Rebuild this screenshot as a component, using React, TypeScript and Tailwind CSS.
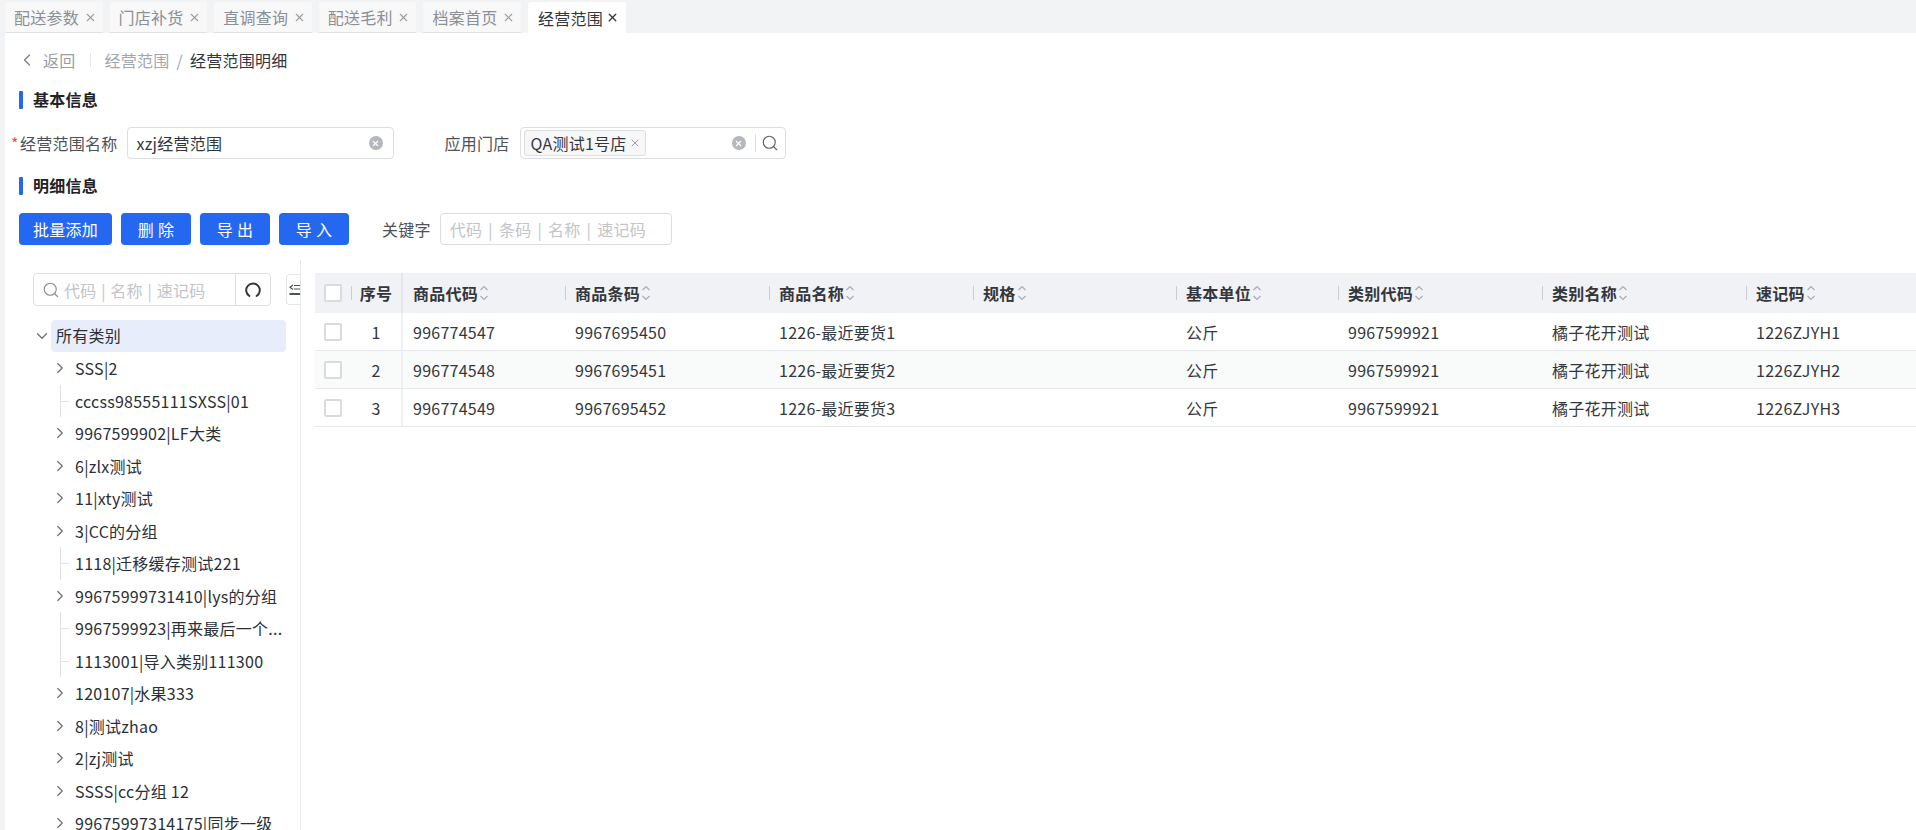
import { ChevronDown, ChevronLeft, ChevronRight, Search, X } from 'lucide-react';

const tabs = ['配送参数', '门店补货', '直调查询', '配送毛利', '档案首页'];

interface TreeItem {
  label: string;
  leaf?: boolean;
}

const treeItems: TreeItem[] = [
  { label: 'SSS|2' },
  { label: 'cccss98555111SXSS|01', leaf: true },
  { label: '9967599902|LF大类' },
  { label: '6|zlx测试' },
  { label: '11|xty测试' },
  { label: '3|CC的分组' },
  { label: '1118|迁移缓存测试221', leaf: true },
  { label: '99675999731410|lys的分组' },
  { label: '9967599923|再来最后一个...', leaf: true },
  { label: '1113001|导入类别111300', leaf: true },
  { label: '120107|水果333' },
  { label: '8|测试zhao' },
  { label: '2|zj测试' },
  { label: 'SSSS|cc分组 12' },
  { label: '99675997314175|同步一级' },
];

const rows = [
  { no: 1, code: '996774547', bar: '9967695450', name: '1226-最近要货1', quick: '1226ZJYH1' },
  { no: 2, code: '996774548', bar: '9967695451', name: '1226-最近要货2', quick: '1226ZJYH2' },
  { no: 3, code: '996774549', bar: '9967695452', name: '1226-最近要货3', quick: '1226ZJYH3' },
];

const columns = ['商品代码', '商品条码', '商品名称', '规格', '基本单位', '类别代码', '类别名称', '速记码'];

const gridCols = 'grid grid-cols-[36px_52px_162px_204px_204px_203px_162px_204px_204px_1fr]';

function SectionTitle({ title }: { title: string }) {
  return (
    <div className="flex items-center gap-[10px] h-[18px]">
      <span className="w-[4px] h-[18px] rounded-[1px] bg-[#2468f2]" />
      <span className="font-bold text-[#1f2329] pb-[2px]">{title}</span>
    </div>
  );
}

function ClearDot() {
  return (
    <span className="w-[14px] h-[14px] rounded-full bg-[#b4b7bd] flex items-center justify-center shrink-0">
      <X className="w-[9px] h-[9px] text-white" strokeWidth={3} />
    </span>
  );
}

function SortIcon() {
  return (
    <svg width="10" height="18" viewBox="0 0 10 18" fill="none" stroke="#a9adb5" strokeWidth="1.2" className="ml-[1px]">
      <path d="M1.5 6 L5 2.5 L8.5 6" />
      <path d="M1.5 12 L5 15.5 L8.5 12" />
    </svg>
  );
}

function Checkbox() {
  return <span className="block w-[18px] h-[18px] rounded-[2px] border-2 border-[#d9dbdf] bg-white" />;
}

function ActionButton({ label, wide }: { label: string; wide?: boolean }) {
  return (
    <button className={`${wide ? 'w-[93px]' : 'w-[70px]'} h-[32px] rounded-[4px] bg-[#2468f2] text-white`}>
      {label}
    </button>
  );
}

function TreeRow({ item }: { item: TreeItem }) {
  return (
    <div className="relative h-[32.5px] flex items-center pl-[55px] text-[#2b2f36] whitespace-nowrap">
      {item.leaf ? (
        <>
          <span className="absolute left-[55px] top-0 bottom-0 w-px bg-[#dfe1e5]" />
          <span className="absolute left-[55px] top-1/2 w-[9px] h-px bg-[#dfe1e5]" />
        </>
      ) : (
        <ChevronRight className="absolute left-[46px] w-[18px] h-[18px] text-[#6b7078]" strokeWidth={1.6} />
      )}
      <span className="ml-[15px]">{item.label}</span>
    </div>
  );
}

export default function App() {
  return (
    <div
      className="w-[1916px] h-[830px] overflow-hidden bg-[#f2f3f5] text-[16px] leading-none tracking-[0.25px] flex flex-col"
      style={{ fontFamily: '"Noto Sans CJK SC", "Noto Sans", sans-serif' }}
    >
      {/* Tab strip */}
      <div className="h-[33px] shrink-0 pt-[2px] pl-[5px] flex gap-[7px]">
        {tabs.map((tab) => (
          <div
            key={tab}
            className="w-[97.6px] h-[31px] rounded-t-[3px] bg-[#f8f8f9] border-b border-[#dfe1e5] flex items-center justify-between pl-[9px] pr-[6px] text-[#8b8f96]"
          >
            <span>{tab}</span>
            <X className="w-[13px] h-[13px] text-[#9a9da3]" strokeWidth={2} />
          </div>
        ))}
        <div className="w-[98px] h-[31px] rounded-t-[3px] bg-white flex items-center justify-between pl-[10px] pr-[7px] text-[#33373d]">
          <span>经营范围</span>
          <X className="w-[13px] h-[13px] text-[#33373d]" strokeWidth={2.5} />
        </div>
      </div>

      <div className="flex-1 ml-[5px] bg-white flex flex-col min-h-0">
        {/* Breadcrumb */}
        <div className="h-[49px] shrink-0 pl-[12px] flex items-center pt-[4px] text-[#a3a6ac]">
          <ChevronLeft className="w-[20px] h-[20px] text-[#7d8187]" strokeWidth={1.6} />
          <span className="ml-[6px] text-[#9a9da3]">返回</span>
          <span className="w-px h-[14px] bg-[#e4e6ea] ml-[14px]" />
          <span className="ml-[14px]">经营范围</span>
          <span className="mx-[7px]">/</span>
          <span className="text-[#33373d]">经营范围明细</span>
        </div>

        {/* Basic info */}
        <div className="pl-[14px] pt-[9px]">
          <SectionTitle title="基本信息" />
        </div>
        <div className="flex items-center h-[32px] mt-[18px]">
          <span className="w-[15px] pl-[6px] text-[#f04b4b] shrink-0">*</span>
          <span className="text-[#4e5259] whitespace-nowrap">经营范围名称</span>
          <div className="ml-[9px] w-[267px] h-[32px] rounded-[4px] border border-[#dcdee2] flex items-center justify-between pl-[9px] pr-[10px] text-[#33373d]">
            <span>xzj经营范围</span>
            <ClearDot />
          </div>
          <span className="ml-[51px] text-[#4e5259] whitespace-nowrap">应用门店</span>
          <div className="ml-[10px] w-[266px] h-[32px] rounded-[4px] border border-[#dcdee2] flex items-center pl-[3px] pr-[6px] text-[#33373d]">
            <span className="h-[26px] w-[122px] rounded-[3px] border border-[#dcdee2] bg-[#f7f7f8] flex items-center justify-between pl-[6px] pr-[4px] whitespace-nowrap">
              QA测试1号店
              <X className="w-[12px] h-[12px] text-[#9a9da3]" strokeWidth={2} />
            </span>
            <span className="ml-auto"><ClearDot /></span>
            <span className="w-px h-[18px] bg-[#dcdee2] ml-[9px]" />
            <Search className="w-[18px] h-[18px] text-[#5c6066] ml-[5px]" strokeWidth={1.5} />
          </div>
        </div>

        {/* Detail section */}
        <div className="pl-[14px] mt-[18px]">
          <SectionTitle title="明细信息" />
        </div>
        <div className="flex items-center h-[32px] mt-[18px] pl-[14px]">
          <div className="flex gap-[9px]">
            <ActionButton label="批量添加" wide />
            <ActionButton label="删 除" />
            <ActionButton label="导 出" />
            <ActionButton label="导 入" />
          </div>
          <span className="ml-[33px] text-[#4e5259] whitespace-nowrap">关键字</span>
          <div className="ml-[9px] w-[232px] h-[32px] rounded-[4px] border border-[#dcdee2] flex items-center pl-[9px] text-[#c2c4c8] whitespace-nowrap [word-spacing:2.2px]">
            代码 | 条码 | 名称 | 速记码
          </div>
        </div>

        <div className="flex-1 flex min-h-0 mt-[15px]">
          {/* Category tree */}
          <div className="w-[296px] shrink-0 border-r border-[#e4e6ea] overflow-hidden relative pt-[13px]">
            <div className="ml-[28px] w-[238px] h-[33px] rounded-[4px] border border-[#dcdee2] flex">
              <div className="flex-1 flex items-center pl-[8px] text-[#c2c4c8] whitespace-nowrap [word-spacing:0.8px]">
                <Search className="w-[18px] h-[18px] text-[#8b8f96] mr-[4px]" strokeWidth={1.5} />
                代码 | 名称 | 速记码
              </div>
              <div className="w-[35px] border-l border-[#dcdee2] flex items-center justify-center">
                <svg width="16" height="16" viewBox="0 0 16 16" fill="none" stroke="#33373d" strokeWidth="1.9" strokeLinecap="round">
                  <path d="M4.4 14 A6.8 6.8 0 1 1 11.6 14" />
                </svg>
              </div>
            </div>
            <div className="absolute right-0 top-[14px] w-[14px] h-[31px] rounded-l-[4px] border border-r-0 border-[#e4e6ea] bg-white flex items-center justify-end overflow-hidden">
              <svg width="11" height="12" viewBox="0 0 11 12" fill="none" stroke="#4e5259" strokeWidth="1.2">
                <path d="M4 1 L1 3.2 L4 5.4" />
                <path d="M5 1.5 H11 M5 5 H11" />
                <path d="M0.5 10 H11" strokeWidth="1.8" />
              </svg>
            </div>
            <div className="relative h-[32px] mt-[14px] flex items-center text-[#2b2f36]">
              <ChevronDown className="absolute left-[28px] w-[18px] h-[18px] text-[#6b7078]" strokeWidth={1.6} />
              <div className="ml-[46px] w-[235px] h-[32px] rounded-[4px] bg-[#e8edfb] flex items-center pl-[5px] pb-[2px]">所有类别</div>
            </div>
            <div>
              {treeItems.map((item) => (
                <TreeRow key={item.label} item={item} />
              ))}
            </div>
          </div>

          {/* Goods table */}
          <div className="flex-1 pl-[14px] text-[#33373d]">
            <div className={`${gridCols} h-[40px] mt-[13px] bg-[#f1f2f5] items-center font-bold`}>
              <div className="pl-[9px] flex items-center h-full"><Checkbox /></div>
              <div className="relative h-full flex items-center justify-center border-r-2 border-[#e4e6ea]">
                <span className="absolute left-0 w-px h-[14px] bg-[#c9ccd1]" />
                序号
              </div>
              {columns.map((col, i) => (
                <div key={col} className="relative h-full flex items-center pl-[10px]">
                  {i > 0 && <span className="absolute left-0 w-px h-[14px] bg-[#c9ccd1]" />}
                  {col}
                  <SortIcon />
                </div>
              ))}
            </div>
            {rows.map((row) => (
              <div key={row.no} className={`${gridCols} h-[38px] items-center border-b border-[#e6e8eb] ${row.no === 2 ? 'bg-[#f9fafa]' : ''}`}>
                <div className="pl-[9px]"><Checkbox /></div>
                <div className="h-full flex items-center justify-center border-r-2 border-[#eef0f2]">{row.no}</div>
                <div className="pl-[10px]">{row.code}</div>
                <div className="pl-[10px]">{row.bar}</div>
                <div className="pl-[10px]">{row.name}</div>
                <div />
                <div className="pl-[10px]">公斤</div>
                <div className="pl-[10px]">9967599921</div>
                <div className="pl-[10px]">橘子花开测试</div>
                <div className="pl-[10px]">{row.quick}</div>
              </div>
            ))}
          </div>
        </div>
      </div>
    </div>
  );
}
